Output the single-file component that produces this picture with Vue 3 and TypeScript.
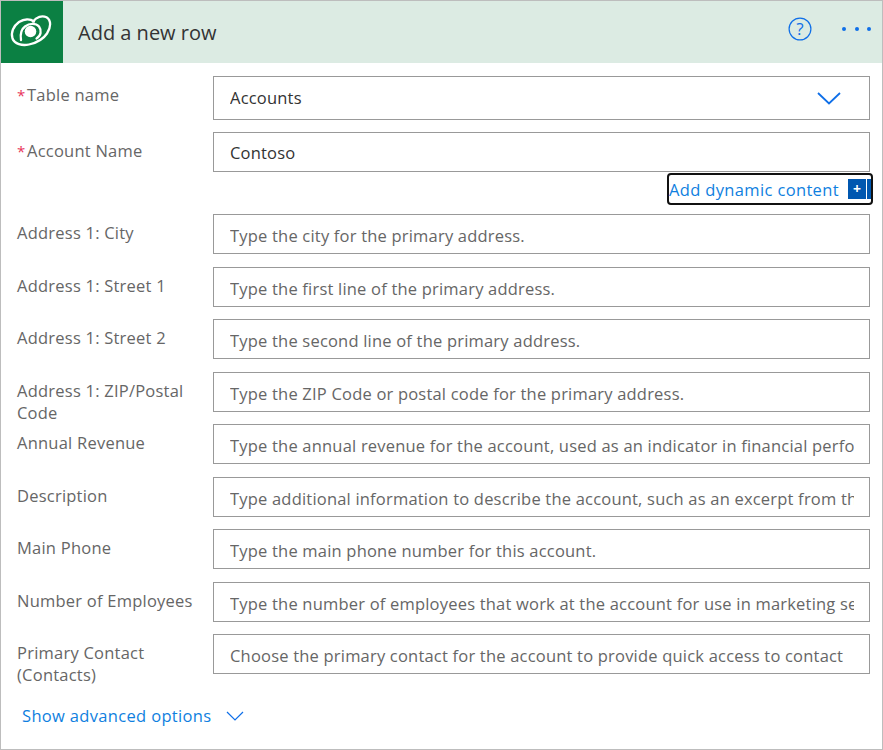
<script setup lang="ts">
interface Field {
  label: string
  text: string
  required?: boolean
  filled?: boolean
  tall?: boolean
  select?: boolean
}

const top: Field[] = [
  { label: 'Table name', text: 'Accounts', required: true, filled: true, tall: true, select: true },
  { label: 'Account Name', text: 'Contoso', required: true, filled: true },
]

const rest: Field[] = [
  { label: 'Address 1: City', text: 'Type the city for the primary address.' },
  { label: 'Address 1: Street 1', text: 'Type the first line of the primary address.' },
  { label: 'Address 1: Street 2', text: 'Type the second line of the primary address.' },
  { label: 'Address 1: ZIP/Postal Code', text: 'Type the ZIP Code or postal code for the primary address.' },
  { label: 'Annual Revenue', text: 'Type the annual revenue for the account, used as an indicator in financial performance analysis.' },
  { label: 'Description', text: 'Type additional information to describe the account, such as an excerpt from the company website.' },
  { label: 'Main Phone', text: 'Type the main phone number for this account.' },
  { label: 'Number of Employees', text: 'Type the number of employees that work at the account for use in marketing segmentation.' },
  { label: 'Primary Contact (Contacts)', text: 'Choose the primary contact for the account to provide quick access to contact' },
]
</script>

<template>
  <div class="card">
    <header class="head">
      <div class="logo">
        <svg width="62" height="62" viewBox="0 0 62 62" fill="none">
          <path d="M33 20.500C29 17.500 23 18 18 21C12.500 25 9.500 31.500 11.500 37.500C13.500 43 21 45 28 43.500C35 42 42 38.500 46 32.500C50 26.500 50.500 19.500 45.500 16.300C41 14 35.500 16 32 20.500" stroke="#fff" stroke-width="2.300" stroke-linecap="round"/>
          <path d="M20 39C19 33 20 28.500 24 25.500C28.500 22 35 22 38 25.500C41 29.500 40 35 35.500 37.500" stroke="#fff" stroke-width="2.300" stroke-linecap="round"/>
          <circle cx="29.500" cy="30.500" r="5.800" fill="#fff"/>
        </svg>
      </div>
      <div class="title">Add a new row</div>
      <div class="actions">
        <svg class="help" width="24" height="24" viewBox="0 0 24 24" fill="none">
          <circle cx="12" cy="12" r="10.900" stroke="#0f6fe8" stroke-width="1.200"/>
          <text x="12" y="17.800" text-anchor="middle" class="q">?</text>
        </svg>
        <div class="dots"><i></i><i></i><i></i></div>
      </div>
    </header>

    <section class="form">
      <div v-for="f in top" :key="f.label" class="row" :class="{ tall: f.tall }">
        <label class="lab"><span v-if="f.required" class="star">*</span>{{ f.label }}</label>
        <div class="box" :class="{ filled: f.filled }">
          <div class="val">{{ f.text }}</div>
          <svg v-if="f.select" width="26" height="16" viewBox="0 0 26 16" fill="none">
            <path d="M2 3L13 13.500L24 3" stroke="#0f6fe8" stroke-width="1.800"/>
          </svg>
        </div>
      </div>

      <div class="dyn-wrap">
        <button class="dyn" type="button">
          <span>Add dynamic content</span>
          <span class="plus">+</span>
          <span class="sliver"></span>
        </button>
      </div>

      <div v-for="f in rest" :key="f.label" class="row">
        <label class="lab">{{ f.label }}</label>
        <div class="box">
          <div class="val">{{ f.text }}</div>
        </div>
      </div>

      <div class="adv">
        <span>Show advanced options</span>
        <svg width="18" height="10" viewBox="0 0 18 10" fill="none">
          <path d="M1 1L9 9L17 1" stroke="#0f6fe8" stroke-width="1.200"/>
        </svg>
      </div>
    </section>
  </div>
</template>

<style>
html, body { margin: 0; background: #fff; }
</style>

<style scoped>
.card {
  box-sizing: border-box;
  width: 883px;
  height: 750px;
  border: 1px solid #bdbdbd;
  font-family: "Open Sans", "Noto Sans", sans-serif;
  font-size: 16.500px;
  background: #fff;
  overflow: hidden;
}
.head {
  display: flex;
  align-items: center;
  height: 62px;
  background: #dcebe3;
}
.logo {
  width: 62px;
  height: 62px;
  background: #0b8043;
  flex: none;
}
.logo svg { display: block; }
.title {
  margin-left: 15px;
  font-size: 20px;
  color: #333;
}
.actions {
  margin-left: auto;
  margin-right: 11px;
  margin-bottom: 6px;
  display: flex;
  align-items: center;
  gap: 30px;
}
.help { display: block; }
.q {
  font-family: "Open Sans", sans-serif;
  font-size: 17px;
  fill: #0f6fe8;
}
.dots { display: flex; gap: 8.500px; }
.dots i {
  display: block;
  width: 4px;
  height: 4px;
  border-radius: 50%;
  background: #0f6fe8;
}
.form { padding: 13px 12px 0 16px; }
.row {
  display: flex;
  height: 40px;
  margin-bottom: 12.500px;
}
.row.tall { height: 44px; margin-bottom: 12px; }
.row:nth-child(2) { margin-bottom: 0; }
.lab {
  box-sizing: border-box;
  flex: none;
  width: 196px;
  padding-top: 8px;
  padding-right: 10px;
  font-size: 16.500px;
  line-height: 22px;
  letter-spacing: 0.23px;
  color: #666;
}
.star {
  display: inline-block;
  width: 10px;
  color: #e8355a;
  font-size: 15px;
}
.box {
  box-sizing: border-box;
  flex: 1;
  min-width: 0;
  display: flex;
  align-items: center;
  padding: 0 15px 0 16px;
  border: 1px solid #999;
  background: #fff;
}
.val {
  flex: 1;
  min-width: 0;
  padding-top: 3px;
  overflow: hidden;
  white-space: nowrap;
  font-size: 16.500px;
  letter-spacing: 0.2px;
  color: #666;
}
.box.filled .val { color: #333; padding-top: 1px; }
.tall .box.filled .val { padding-top: 0; padding-bottom: 2px; }
.box svg { flex: none; margin-right: 12px; }
.dyn-wrap {
  display: flex;
  justify-content: flex-end;
  height: 42px;
  margin-right: -3px;
}
.dyn {
  box-sizing: border-box;
  display: flex;
  align-items: center;
  width: 206px;
  height: 32px;
  margin-top: 1px;
  padding: 0;
  border: 2px solid #111;
  border-radius: 4px;
  background: #fff;
  font: inherit;
  font-size: 16.500px;
  letter-spacing: 0.35px;
  color: #0f7fe0;
}
.plus {
  width: 18px;
  height: 20px;
  margin-left: auto;
  background: #0057b0;
  color: #fff;
  font-size: 14px;
  font-weight: 700;
  line-height: 19px;
  text-align: center;
  letter-spacing: 0;
}
.sliver {
  width: 4px;
  height: 20px;
  margin-left: 1px;
  background: #0057b0;
}
.adv {
  display: flex;
  align-items: center;
  gap: 15px;
  margin: 31px 0 0 5px;
  font-size: 16.500px;
  letter-spacing: 0.33px;
  line-height: 22px;
  color: #0f7fe0;
}
</style>
